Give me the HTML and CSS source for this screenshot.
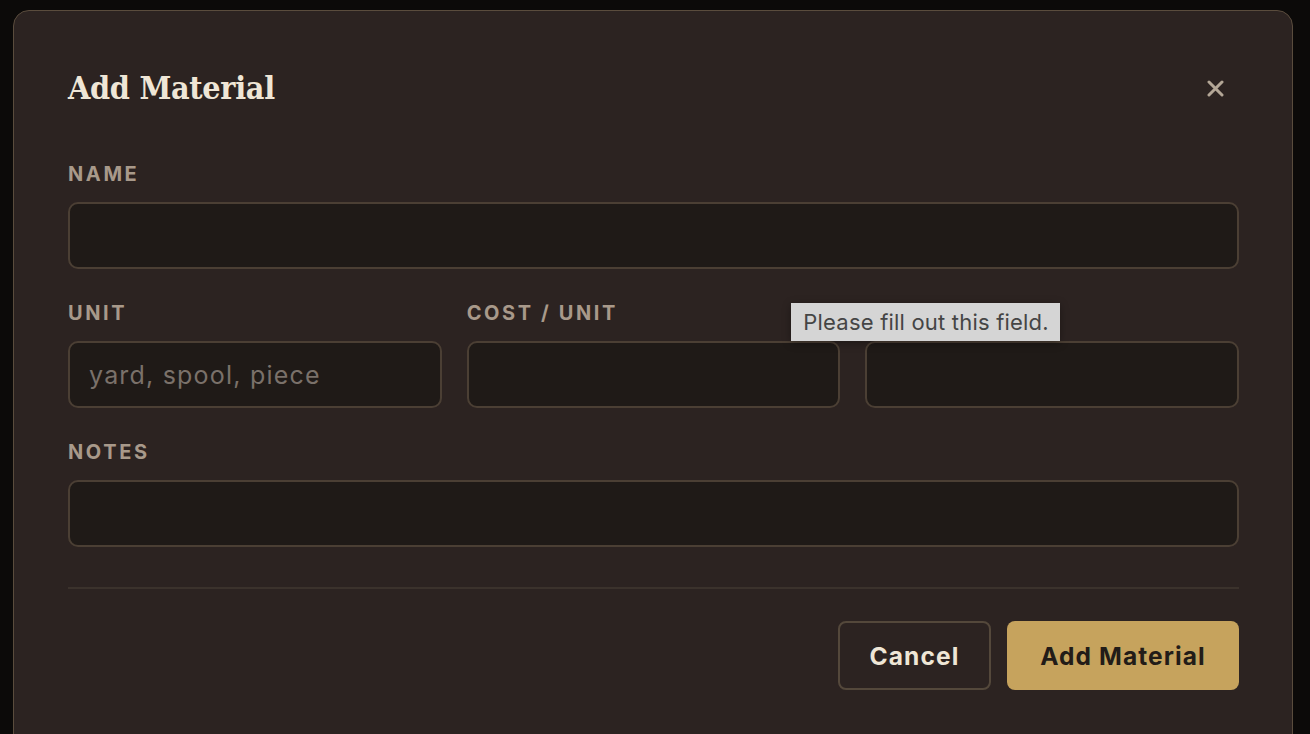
FILE: index.html
```html
<!DOCTYPE html>
<html lang="en">
<head>
<meta charset="utf-8">
<title>Add Material</title>
<link rel="stylesheet" href="styles.css">
</head>
<body>
<div class="overlay">
  <div class="modal">
    <header class="modal-head">
      <h2 class="modal-title">Add Material</h2>
      <button class="close-btn" type="button" aria-label="Close">
        <svg width="17" height="17" viewBox="0 0 17 17"><path d="M2 2 L15 15 M15 2 L2 15" stroke="currentColor" stroke-width="3" stroke-linecap="round" fill="none"/></svg>
      </button>
    </header>
    <form class="modal-body">
      <div class="field">
        <label class="label">Name</label>
        <input class="input" type="text">
      </div>
      <div class="row3">
        <div class="field">
          <label class="label">Unit</label>
          <input class="input" type="text" placeholder="yard, spool, piece">
        </div>
        <div class="field">
          <label class="label">Cost / Unit</label>
          <input class="input" type="text">
        </div>
        <div class="field field-tip">
          <label class="label label-hidden">In Stock</label>
          <input class="input" type="text">
          <div class="tooltip">Please fill out this field.</div>
        </div>
      </div>
      <div class="field">
        <label class="label">Notes</label>
        <input class="input" type="text">
      </div>
    </form>
    <div class="divider"></div>
    <footer class="modal-foot">
      <button class="btn btn-ghost" type="button">Cancel</button>
      <button class="btn btn-primary" type="button">Add Material</button>
    </footer>
  </div>
</div>
</body>
</html>
```
FILE: styles.css
```css
* { box-sizing: border-box; }
html, body { margin: 0; padding: 0; }
body {
  background: #0c0a09;
  width: 1310px;
  height: 734px;
  overflow: hidden;
  font-family: Inter, "Liberation Sans", sans-serif;
}
.overlay {
  padding: 10px 0 0 13px;
}
.modal {
  width: 1280px;
  height: 740px;
  background: #2c2321;
  border: 1.5px solid #5a4c3d;
  border-radius: 16px;
  padding: 57px 53px 0 54px;
  display: flex;
  flex-direction: column;
}
.modal-head {
  display: flex;
  align-items: center;
  justify-content: space-between;
  height: 40px;
}
.modal-title {
  margin: 0;
  font-family: "DejaVu Serif Condensed", "DejaVu Serif", serif;
  font-stretch: condensed;
  font-weight: bold;
  font-size: 32px;
  line-height: 40px;
  letter-spacing: -0.3px;
  color: #efe6d6;
}
.close-btn {
  width: 47px;
  height: 40px;
  border: 0;
  background: transparent;
  color: #b3a696;
  display: flex;
  align-items: center;
  justify-content: center;
  padding: 0;
}
.close-btn svg { display: block; }
.modal-body {
  margin: 54px 0 0;
  display: flex;
  flex-direction: column;
  gap: 32px;
}
.row3 {
  display: grid;
  grid-template-columns: 1fr 1fr 1fr;
  gap: 25px;
}
.field {
  display: flex;
  flex-direction: column;
  gap: 16px;
}
.field-tip { position: relative; }
.label {
  font-size: 20px;
  line-height: 24px;
  font-weight: 700;
  letter-spacing: 2.6px;
  text-transform: uppercase;
  color: #a8998a;
}
.label-hidden { visibility: hidden; }
.input {
  height: 67px;
  width: 100%;
  background: #1f1a17;
  border: 2px solid #4b3f34;
  border-radius: 10px;
  padding: 0 19px;
  font-family: Inter, "Liberation Sans", sans-serif;
  font-size: 25px;
  letter-spacing: 1.2px;
  color: #efe6d6;
  outline: none;
}
.input::placeholder { color: #7a716a; }
.tooltip {
  position: absolute;
  left: -74px;
  top: 2px;
  width: 269px;
  height: 38px;
  background: #d5d5d5;
  color: #454545;
  font-family: Inter, "Liberation Sans", sans-serif;
  font-size: 22px;
  letter-spacing: 0.2px;
  line-height: 38px;
  padding: 0 0 0 12px;
  white-space: nowrap;
  box-shadow: 0 2px 8px rgba(0,0,0,0.35);
}
.divider {
  height: 2px;
  background: #3b322c;
  margin-top: 40px;
}
.modal-foot {
  margin-top: 32px;
  display: flex;
  justify-content: flex-end;
  gap: 16px;
}
.btn {
  height: 69px;
  border-radius: 8px;
  font-family: Inter, "Liberation Sans", sans-serif;
  font-size: 24.5px;
  font-weight: 700;
  letter-spacing: 1.1px;
  padding: 0;
}
.btn-ghost {
  background: transparent;
  border: 2px solid #54483b;
  color: #efe6d6;
  width: 153px;
}
.btn-primary {
  background: #c6a35d;
  border: 0;
  color: #221c18;
  width: 232px;
}
```
